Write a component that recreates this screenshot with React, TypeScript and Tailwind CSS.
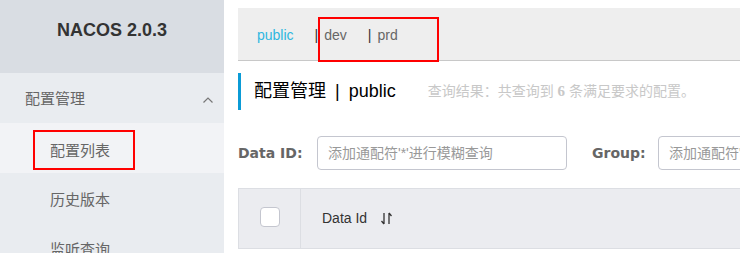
const cjk = '"Liberation Sans", "Noto Sans CJK SC", sans-serif';

const SortIcon = () => (
  <svg width="13" height="13" viewBox="0 0 13 13" fill="none" stroke="#333" strokeWidth="1.3">
    <path d="M4 1v11M4 12L1.5 9" />
    <path d="M9 12V1M9 1l2.5 3" />
  </svg>
);

const Chevron = () => (
  <svg width="12" height="8" viewBox="0 0 12 8" fill="none" stroke="#777" strokeWidth="1.2">
    <path d="M1.5 6.5L6 2l4.5 4.5" />
  </svg>
);

const SideItem = ({ label }: { label: string }) => (
  <div className="h-[50px] flex items-center pl-[50px] pt-[4px] text-[15px] text-[#666]">{label}</div>
);

const SearchInput = () => (
  <div className="w-[250px] h-[34px] shrink-0 border border-[#c4c6cf] rounded-[4px] flex items-center pl-[10px] text-[14px] text-[#999]">
    添加通配符'*'进行模糊查询
  </div>
);

export default function App() {
  return (
    <div className="w-[740px] h-[253px] overflow-hidden flex bg-white" style={{ fontFamily: cjk }}>
      {/* sidebar */}
      <aside className="w-[224px] shrink-0 bg-[#e9ecf0]">
        <div className="h-[73px] bg-[#d9dde3] flex items-center justify-center">
          <span className="font-['Liberation_Sans'] font-bold text-[18px] text-[#333] -mt-[12px]">NACOS 2.0.3</span>
        </div>
        <div className="h-[50px] flex items-center justify-between pl-[25px] pr-[10px] pt-[3px] text-[15px] text-[#666]">
          <span>配置管理</span>
          <Chevron />
        </div>
        <div className="h-[50px] bg-[#f2f3f6] flex items-start pt-[7px] pl-[33px]">
          <div className="w-[102px] h-[40px] border-2 border-[#f00] flex items-center pl-[15px] pt-[3px] text-[15px] text-[#666]">
            配置列表
          </div>
        </div>
        <SideItem label="历史版本" />
        <SideItem label="监听查询" />
      </aside>

      {/* main */}
      <main className="flex-1 min-w-0 pl-[14px] pt-[8px]">
        <div className="relative h-[53px] bg-[#eeeeee] border-b border-[#c8c8c8] flex items-center pl-[19px] text-[14px] pt-[2px]">
          <span className="text-[#2fb7e0]">public</span>
          <span className="ml-[21px] text-[#333]">|</span>
          <span className="ml-[6px] text-[#666]">dev</span>
          <span className="ml-[21px] text-[#333]">|</span>
          <span className="ml-[6px] text-[#666]">prd</span>
          <div className="absolute left-[80px] top-[9px] w-[121px] h-[45px] border-2 border-[#f00]" />
        </div>

        <div className="mt-[12px] h-[37px] border-l-[3px] border-[#0b9bd6] flex items-center pl-[13px]">
          <span className="text-[18px] text-black">配置管理</span>
          <span className="ml-[9px] text-[18px] text-black">|</span>
          <span className="ml-[9px] text-[18px] text-black">public</span>
          <span className="ml-[32px] text-[14px] text-[#c8c8c8] whitespace-nowrap">
            查询结果：共查询到 <b className="font-['Liberation_Serif'] text-[15px]">6</b> 条满足要求的配置。
          </span>
        </div>

        <div className="mt-[26px] h-[34px] flex items-center whitespace-nowrap">
          <span className="w-[79px] shrink-0 font-['DejaVu_Sans'] font-bold text-[14px] text-[#666]">Data ID:</span>
          <SearchInput />
          <span className="ml-[25px] w-[66px] shrink-0 font-['DejaVu_Sans'] font-bold text-[14px] text-[#666]">Group:</span>
          <SearchInput />
        </div>

        <div className="mt-[18px] w-[600px] border-t border-l border-b border-[#dcdee3] bg-[#ebecf0] h-[61px] flex">
          <div className="w-[62px] shrink-0 border-r border-[#dcdee3] flex items-center justify-center pb-[3px]">
            <div className="w-[20px] h-[20px] rounded-[4px] border border-[#c4c6cf] bg-white" />
          </div>
          <div className="flex items-center pl-[21px] text-[14px] text-[#333] gap-[13px]">
            <span>Data Id</span>
            <SortIcon />
          </div>
        </div>
      </main>
    </div>
  );
}
